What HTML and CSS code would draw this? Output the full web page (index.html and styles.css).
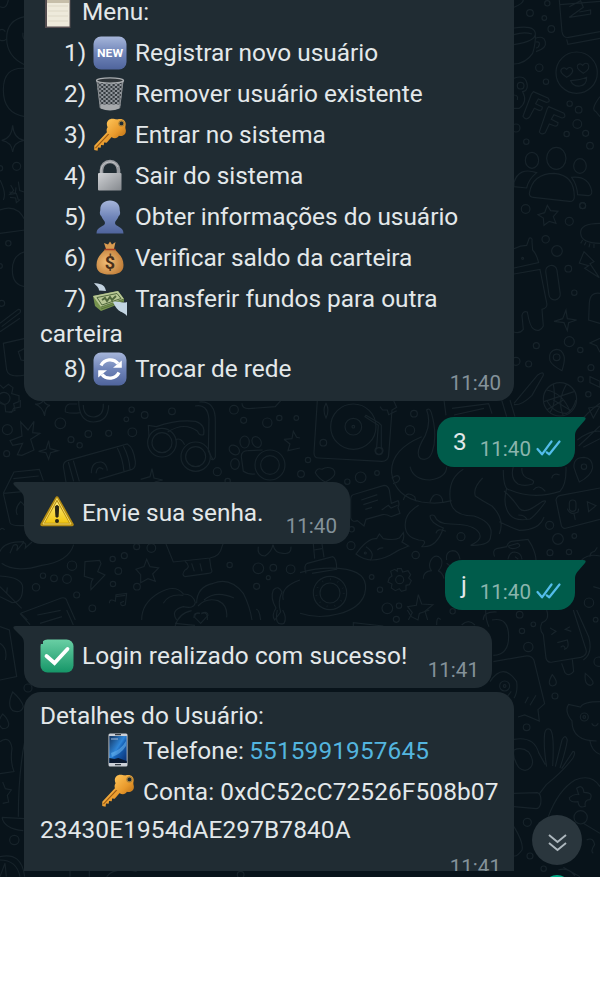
FILE: index.html
```html
<!DOCTYPE html>
<html lang="pt-BR">
<head>
<meta charset="utf-8">
<title>Chat</title>
<link rel="stylesheet" href="styles.css">
</head>
<body>
<svg class="defs" width="0" height="0" aria-hidden="true">
  <defs>
    <linearGradient id="blue" x1="0" y1="0" x2="0" y2="1"><stop offset="0" stop-color="#a6b6da"/><stop offset=".5" stop-color="#7085b9"/><stop offset="1" stop-color="#4f649c"/></linearGradient>
    <linearGradient id="green" x1="0" y1="0" x2="0" y2="1"><stop offset="0" stop-color="#69cfa4"/><stop offset="1" stop-color="#169668"/></linearGradient>
    <linearGradient id="gold" x1="0" y1="0" x2="1" y2="1"><stop offset="0" stop-color="#ffc65a"/><stop offset=".6" stop-color="#e99a2c"/><stop offset="1" stop-color="#b96f16"/></linearGradient>
    <linearGradient id="steel" x1="0" y1="0" x2="1" y2="1"><stop offset="0" stop-color="#cfd1d4"/><stop offset="1" stop-color="#85898e"/></linearGradient>
    <linearGradient id="yellow" x1="0" y1="0" x2="0" y2="1"><stop offset="0" stop-color="#fff08a"/><stop offset="1" stop-color="#f1c40a"/></linearGradient>
    <linearGradient id="screen" x1="0" y1="0" x2="1" y2="1"><stop offset="0" stop-color="#12335e"/><stop offset=".45" stop-color="#2f86d8"/><stop offset=".55" stop-color="#1763b8"/><stop offset="1" stop-color="#0a2c6c"/></linearGradient>
    <radialGradient id="bag" cx=".4" cy=".5" r=".65"><stop offset="0" stop-color="#f4bf78"/><stop offset="1" stop-color="#bd7a35"/></radialGradient>
    <pattern id="mesh" width="4.6" height="4" patternUnits="userSpaceOnUse"><path d="M0 0L4.6 4M4.6 0L0 4" stroke="#a9adb2" stroke-width=".9"/></pattern>
    <symbol id="key" viewBox="0 0 34 35">
      <path d="M15 13.5L.8 28.5V33l3.4.6.4-3.2 2.8.2.4-2.8 2.8.2.3-2.8 2.7.2 6-6.8z" fill="url(#gold)"/>
      <path d="M2 31L17 15" stroke="#9b5a12" stroke-width="1.2"/>
      <path d="M14.500 9.500C12 4 16 0 20.500.8 23 1 23.500 1.600 25 1.400c5-1.800 9 1.600 8 6.200-.4 2-.2 2.800.2 4.400 1 5-3.500 7.500-7 6.300-2 4.200-8.500 2.700-9.500-1.300-3.200-.8-4.200-5-2.200-7.500z" fill="url(#gold)"/>
      <circle cx="28.800" cy="5.600" r="2.600" fill="#202c33" stroke="#a9823b" stroke-width="1.300"/>
    </symbol>
    <symbol id="ticks" viewBox="0 0 26 16">
      <path d="M1.500 9l4.500 5.300L15.500 1.500M10.800 12.300l2.500 2L23.500 1.500" fill="none" stroke="#53bdeb" stroke-width="2.200" stroke-linecap="round" stroke-linejoin="round"/>
    </symbol>
  </defs>
</svg>

<main class="chat">
  <svg class="doodles" viewBox="0 0 600 877" aria-hidden="true">
    <g transform="scale(.3333)">
      <path d="M0 20Q20 30 25 0M75 50Q20 60 20 115T75 195M0 90Q10 85 16 95M0 120Q10 125 18 118M75 205Q10 200 10 270T75 350M75 120q-8 -5 -6 -22"/>
      <path d="M38 376q3 40 34 45-31 5-34 35-3-30-33-35 30-5 33-45zM55 545l4 27 16 5M55 600l-6-20-20 3 12-12-9-16"/>
      <circle cx="50" cy="499" r="12"/><circle cx="0" cy="505" r="8"/>
    </g>
    <g transform="translate(0 180) scale(.3333)">
      <path d="M0 0q20 40 10 60M28 36l18 4 2-18M30 52l17 2 2 14 12-10M0 90Q50 70 75 120M0 160L75 150M75 215q-38 10-38 55t38 50M75 225v85M0 430l55-42q10 0 5 10L5 440M0 455l60-40M75 475l-65 15 10 80q5 25 55 15M75 505l-20 10 8 25 12 2M0 615l10 10 15-12 14 10-4 18 22 6v18l-16 6 4 20-18 6"/>
      <circle cx="25" cy="190" r="8"/><circle cx="5" cy="370" r="9"/><circle cx="0" cy="258" r="7"/><circle cx="12" cy="655" r="18"/>
    </g>
    <g transform="translate(300) scale(.3333)">
      <path d="M642 22Q670 10 670 0M778 0l8 95q3 20 20 17L900 95M800 118l4 15 96-18M780 14l120-10M808 20l34-18 8 20-42 30 64-10v-12l-34 6"/>
      <path d="M642 84q60-10 64 15t-64 35M706 100q2 30-8 60-20 30-56 32M706 115q25-10 30 10t-28 30M708 126q12-2 10 8t-10 10M642 104q30-10 54-2"/>
      <circle cx="830" cy="218" r="62"/><path d="M800 232q-25-16-14-26 8-6 14 2 8-10 16-2 8 12-16 26zM850 220q-25-16-16-26 8-6 14 2 8-10 16-4 10 14-14 28zM812 242q30-2 48-10 0 24-20 26-20 2-28-16z"/>
      <path d="M642 235q36-14 40 22 0 16-14 18 16 30-10 50h-16M642 285q14 0 10 15"/><circle cx="662" cy="257" r="10"/>
      <path d="M700 275l45 20q8 12-6 12l-24-10-8 14 20 10q0 12-10 10l-14-6-14 26q-12 12-20-2l25-66zM746 320l46 20q8 12-6 14l-24-10-8 14 20 10q0 12-10 10l-16-6-12 26q-12 8-18-2l24-70z"/>
      <ellipse cx="696" cy="481" rx="20" ry="24"/><ellipse cx="769" cy="475" rx="29" ry="33"/><ellipse cx="840" cy="498" rx="19" ry="22"/>
      <path d="M688 580q10-60 75-60 60 5 60 70 0 15-15 14L700 592q-12 0-12-12zM710 518q-54-18-68 30v12l38 4q5-25 30-46zM815 532q50-5 60 40 2 14-10 15l-32-3q-2-30-18-52zM900 290q-30 40-12 45l12 15"/>
      <circle cx="690" cy="39" r="10"/><circle cx="742" cy="10" r="8"/><circle cx="733" cy="54" r="7"/><circle cx="754" cy="87" r="10"/><circle cx="718" cy="203" r="11"/><circle cx="738" cy="245" r="8"/><circle cx="809" cy="311" r="8"/><circle cx="836" cy="329" r="10"/><circle cx="832" cy="372" r="13"/><circle cx="800" cy="402" r="8"/><circle cx="857" cy="400" r="9"/><circle cx="870" cy="437" r="10"/><circle cx="679" cy="425" r="8"/><circle cx="648" cy="384" r="12"/><circle cx="848" cy="617" r="9"/><circle cx="677" cy="627" r="13"/>
    </g>
    <g transform="translate(300 200) scale(.3333)">
      <path d="M742 16l10 16 22 2-14 16 8 20-20-6-16 12-2-22-16-10 20-6zM642 146q20-10 38-10l8-22q10-2 8 10l2 26q12 12 18 38l-74 16M642 222l78-14 20 100q4 16-14 20l4 50q-10 20-28 10-12-5-20-52-14-4-16 10l4 42q-10 14-28 8"/>
      <rect x="742" y="196" width="34" height="104" rx="17" transform="rotate(-8 759 248)"/><circle cx="668" cy="175" r="3"/>
      <path d="M852 155l30 30-12 6 28 42-44-28 12-8-28-8zM900 70q-60 0-58 30t58 30M848 120l-6 10M858 126l-5 10M870 130l-3 12M882 132v12M900 280q-30-5-32 30l-2 50 34 10M798 330l4 26 28 4-24 8-4 24-10-24-30-4 26-8zM900 415l-30 14 20 8 10 20M770 448q-26 4-20 34 5 14 36 30 10-30 6-44-6-20-22-20zM642 610l70-84q20-15 18 0l-34 60q-30 30-54 28"/>
      <circle cx="770" cy="472" r="10"/><circle cx="780" cy="598" r="50"/><path d="M740 570q50 10 70 65M732 605q60-20 90-30M760 552q10 60-10 85M800 552q-30 50-10 95"/>
      <circle cx="808" cy="64" r="12"/><circle cx="848" cy="17" r="9"/><circle cx="737" cy="118" r="11"/><circle cx="771" cy="153" r="16"/><circle cx="805" cy="206" r="10"/><circle cx="823" cy="278" r="8"/><circle cx="808" cy="425" r="15"/><circle cx="709" cy="437" r="9"/><circle cx="841" cy="450" r="8"/><circle cx="686" cy="492" r="9"/><circle cx="648" cy="484" r="12"/><circle cx="873" cy="503" r="9"/><circle cx="842" cy="538" r="8"/><circle cx="865" cy="583" r="8"/><path d="M870 530l30 14v18l-30-14zM866 624l34-6-20 36z"/>
    </g>
    <g transform="translate(0 400) scale(.3333)">
      <path d="M105 12q20 2 25-12 5 15 20 16-15 4-16 32-6-28-29-36zM62 66l22 24 18-26-4 34 22 2-28 18 10 32-36 16-14-2 16-34-30 6-8-14 36-14zM146 122l4 24 24 6-22 6-6 20-8-20-22-4 22-6zM456 206l6 28 26 6-24 6M456 206l-6 24-28 8"/>
      <path d="M196 36q-2-20 12-24h24M196 36q20 6 44 2M236 0q0 65 44 66 45 0 46-50M250 15q0 35 32 36 30-4 28-40M190 200q0-14 12-18l180-50q18 10 24 52 2 20-10 24l-100 30M190 200l8 46M205 186l16 58M220 182l18 62M352 144q16 30 20 70M370 138q18 34 20 70M274 220q0-36 30-34 16 4 18 26M288 220q4-26 22-12"/>
      <circle cx="486" cy="128" r="43"/><circle cx="486" cy="128" r="30"/><circle cx="587" cy="170" r="44"/><circle cx="587" cy="170" r="30"/>
      <path d="M447 110l-2-34 24 4q60-22 118-16 30 10 24 40-14 4-18-10-40-30-90 2M526 120q16-10 28 14M585 18q38-8 42 40l-2 95 15 28M598 6q50-4 48 60v105q-5 14-15 4"/>
      <path d="M724 170q0-18 20-18l44-2M724 170l6 44q14 10 36 8"/><circle cx="810" cy="195" r="45"/><circle cx="810" cy="195" r="28"/><ellipse cx="703" cy="150" rx="13" ry="17" transform="rotate(-50 703 150)"/><ellipse cx="734" cy="126" rx="14" ry="18"/><ellipse cx="770" cy="126" rx="13" ry="17" transform="rotate(-30 770 126)"/><ellipse cx="705" cy="192" rx="13" ry="16"/>
      <path d="M852 118l24-2 4-22 10 18 10 2M852 118l18 14-6 20 36-8M726 10q0 16 20 16l80-6 18-20M0 5l15 10 2 20 18 2 6-12 20-4V0"/>
      <path d="M10 280L42 216l76-8 12 34M40 236l76-8M10 280l66-6M10 280l20 88q4 12 50 8M52 345q-10-18 10-40 22 18 14 38M0 390q6-10 14 0"/>
      <path d="M0 455q10-30 72-30M5 490q40 30 120 6 80-10 96-62M30 460l10-24q18-8 10 16l20-24q10 0 6 16l20-18M255 485l44-4 4 10-10 24 22 10-42 44q-2-24 6-32l-26-8zM440 478l10 22 26 4-18 18 8 22-22-8-22 12v-24l-14-16 24-8zM498 432l22 54 110-12q30-4 36-34l4-10M555 484q20 16 0 26-12 16 0 20l70-10q16 0 8-16l-4-28M575 490l8 24M600 490l6 24"/>
      <path d="M328 610q0-16 18-6l2-20 32-4-4 34q-14 8-14-6l10-4M346 590l30-4M0 528q70 4 68 36 0 44-32 44L0 590M0 560l65 65M20 580l2-18M62 640l122-46q14-4 18 12l24 54M62 640l20 20M112 645l70-14M425 660q0-50 50-80 50-30 75 2 30 0 36 26-4 20-36 12-40 10-20 40M490 610q16-30 60-24M590 610q0-50 50-60 50-20 90 30 20 40 26 80M594 618q24-26 60-16 30 14 26 50M768 628q10-2 14 32M612 600q36-30 90-6M600 640q-20-4-18 14M604 642q14-8 18 6v12"/>
      <path d="M820 570q16-16 26 6-14 30-4 60l-18 24q-10-14 4-36-18-30-8-54zM850 600q-10-40 50-60M775 440q-5 26 20 28 20-12 24-34 5 26 30 26 26 4 24-20"/>
      <circle cx="22" cy="89" r="15"/><circle cx="181" cy="70" r="16"/><circle cx="20" cy="161" r="9"/><circle cx="213" cy="119" r="9"/><circle cx="265" cy="102" r="10"/><circle cx="239" cy="136" r="8"/><circle cx="326" cy="100" r="9"/><circle cx="397" cy="97" r="13"/><circle cx="379" cy="58" r="7"/><circle cx="395" cy="29" r="8"/><circle cx="434" cy="45" r="10"/><circle cx="516" cy="34" r="10"/><circle cx="652" cy="215" r="12"/><circle cx="702" cy="29" r="13"/><circle cx="731" cy="61" r="9"/><circle cx="802" cy="68" r="14"/><circle cx="838" cy="54" r="8"/><circle cx="889" cy="54" r="7"/><circle cx="683" cy="243" r="8"/>
      <circle cx="338" cy="477" r="8"/><circle cx="373" cy="467" r="9"/><circle cx="216" cy="497" r="14"/><circle cx="355" cy="513" r="10"/><circle cx="129" cy="527" r="8"/><circle cx="162" cy="535" r="10"/><circle cx="201" cy="537" r="13"/><circle cx="108" cy="562" r="11"/><circle cx="230" cy="585" r="9"/><circle cx="277" cy="625" r="10"/><circle cx="339" cy="552" r="8"/><circle cx="411" cy="560" r="10"/><circle cx="410" cy="440" r="9"/><circle cx="454" cy="444" r="13"/><circle cx="689" cy="495" r="8"/><circle cx="775" cy="505" r="16"/><circle cx="820" cy="503" r="10"/><circle cx="805" cy="533" r="6"/><circle cx="770" cy="559" r="9"/><circle cx="872" cy="508" r="13"/>
    </g>
    <g transform="translate(300 400) scale(.3333)">
      <path d="M52 0l-10 158q0 16 14 16l190 10q18 0 20-18L276 30l14-8-10-22M78 10q-12 20 0 44 12-24 0-44zM240 20l8 10 14 0 4 14 24-12"/><circle cx="160" cy="80" r="68"/><circle cx="160" cy="80" r="25"/><circle cx="160" cy="80" r="4"/><circle cx="70" cy="128" r="10"/><path d="M195 50l40 26-5 66a12 12 0 1 0 14 0V76l-8-8-38-22z"/><circle cx="237" cy="153" r="10"/>
      <path d="M380 30q8-8 14 8 20 70 2 120-10 26-34 18-20-14 14-70 18-40 4-76zM365 110q-95 40-90 110 10 70 90 86 50 8 90-4M330 200q10 40 60 40 50-8 50-40M275 235q20-16 24 0 0 12-20 16M310 300q10-30 34-10l4 14M390 306q10-30 28-20 10 6 10 20M490 208q-50 30-38 100 10 40 70 40 60 20 50 60 0 30-60 28 44-20 20-44-20-20-80-20-40 0-48-24-8-6-14 0 0 20 40 36-20 60-64 56 20-20-10-20-44-10-40-50 0-30 40-54M548 234q-30 30-22 54 20 14 50 30 40 40 22 84M610 210q0 60 20 60 70 30 150 4 20-20 18-74M640 200q-10 36 14 52 20 8 44 0 8-10-6-14-30-8-26-34M620 265q-14 50 10 80 16 20 60 12 16-10 44-48 8-10-8-4l-24 16q-30 20-44 4-20-30-46-52M598 365q40 20 60 26 60 0 74-40M700 270q16-20 36 4M755 235q4-18 24-10M655 345q20 0 26 14M408 400q4-18 30-6"/>
      <path d="M432 0l6 46M456 25l110-14 10 30M462 45l90-20M605 0l15 50M630 0l15 50M740 0q20 40 60 40 20-10 28-40M740 30L790 0M760 0l50 30M838 70q20-30 62-60M832 120q40-30 68-26M836 138l64-60M850 142l50-26"/>
      <path d="M46 218q4-16 20-10 14-10 32-2 20 20-22 40-20-10-30-28zM152 298q0-14 14-16l86-26q12 0 16 14l6 40 20-8q6 10 0 20l6 18-26 10q-16-8-26-6l-50 14-6 20-20-16q-16 6-20-8zM184 300l48-16M190 314l44-14M196 328l20-6M245 330l20-14 8 8 20-8M168 462q36-50 62-46l8-14 12 14q34 6 48-2l12-16q4 18-4 28l20 12q-30 10-56 28-60 30-102-4zM198 440q30 20 12 42M232 450q8-8 18-6"/><circle cx="196" cy="459" r="3"/>
      <path d="M40 432l4 44M66 432l6 40M42 450l24-4M18 520q-8-24 4-30l76-20q12 4 12 38l-74 12M0 518q70-20 140-10 70 14 54 74-14 44-80 60-60 16-114-2"/><circle cx="90" cy="579" r="50"/><circle cx="90" cy="579" r="30"/><circle cx="90" cy="579" r="41" stroke-dasharray="2 22" stroke-width="6"/>
      <circle cx="299" cy="539" r="12"/><path d="M292 506l12 0 4 10 16-4 8 12-6 10 8 8-6 12-10 2v14l-14 4-6-8-12 6-12-8 2-12-12-6 4-12 8-6-4-14 12-6 8 6z"/>
      <path d="M355 584l10 28 34 2-24 20 8 26M355 584l-6 32-26 4 14 18-12 22M370 536q0-22 24-24-10-14-2-30 10-18 24-12 14 8 8 28-6 14-10 14 14 6 18 24M440 480q-4-26 18-28 18 0 22 26M440 490l24 18M584 470q-8-20 6-24l30-6q4-14 14-16l50-6q10 16 12 20 12 26 12 42M625 438l28-8q14 8-4 14-20 6-24-6M624 478q4-22 20-22 20 2 22 22M645 470l10 8M768 300q2-12 14-14l118-22M768 300l16 76q4 12 16 8l100-26M862 305l26 12-22 18z"/><rect x="808" y="300" width="20" height="34" rx="10"/><path d="M802 326q8 22 32 10l2-10M822 342l4 18"/>
      <path d="M852 172q-32 0-30 30 6 20 16 44 34-16 40-42 0-30-26-32z"/><circle cx="852" cy="200" r="8"/><path d="M870 470q0-14 14-16l8-12M845 480q20-20 55-12M880 560l20 6M550 660q-2-26 40-24"/>
      <circle cx="342" cy="41" r="10"/><circle cx="330" cy="91" r="14"/><circle cx="182" cy="232" r="16"/><circle cx="231" cy="219" r="7"/><circle cx="142" cy="245" r="8"/><circle cx="24" cy="180" r="8"/><circle cx="3" cy="222" r="10"/><circle cx="153" cy="437" r="12"/><circle cx="215" cy="531" r="7"/><circle cx="240" cy="569" r="8"/><circle cx="262" cy="625" r="16"/><circle cx="297" cy="617" r="8"/><circle cx="347" cy="465" r="11"/><circle cx="483" cy="410" r="12"/><circle cx="749" cy="376" r="12"/><circle cx="774" cy="417" r="16"/><circle cx="823" cy="408" r="7"/><circle cx="750" cy="458" r="9"/><circle cx="807" cy="456" r="8"/><circle cx="867" cy="608" r="14"/><circle cx="155" cy="388" r="8"/>
    </g>
    <g transform="translate(0 610) scale(.3333)">
      <path d="M60 10l30 34M120 40l66-20M200 0l20 45M0 50l28 10 22 140-50 10M0 100q24 16 16 50M38 246q-18 40 0 56 26 10 32-12-4-20-32-44zM8 312q-22 30 0 44 20 0 18-16-4-16-18-28zM0 395q30-20 36 20-6 40 6 70l-42 6M8 516l8 20 18 4-12 16 4 20-18 4M75 390q-20 100-20 230M6 622l68 4M6 622q6 34 64 40M0 740q65-15 74 60M0 750q50 0 60 50M0 800l15-40 4 40M210 800v-20l58-2v22M320 800q20-30 90-16M525 50q10-40 50-48M525 40l60 6M600 10q-16-4-16 12l18 18 22-24q0-14-20-6"/>
      <circle cx="84" cy="234" r="12"/><circle cx="43" cy="690" r="14"/><circle cx="722" cy="794" r="10"/><path d="M832 0q-10 50 20 40 10-16-4-40"/>
    </g>
    <g transform="translate(300 610) scale(.3333)">
      <path d="M160 48v-10l90 10M322 0l12 20 20 10 4-20 30-10M410 45q0-30 12-16M485 45q20-20 40 0M557 0q0 30 10 50M576 30q50-10 50 50 0 54-46 56M580 155l90-16q24-6 32 12l32 130-20 18 4 34-44-18-20 6M570 215q40-60 80 0 4 30-8 50M620 262l14-18M675 280l10-20M690 286l18-30"/><circle cx="614" cy="228" r="15"/><circle cx="614" cy="228" r="4"/>
      <path d="M740 0q10 30-14 38-10 20 4 36l8 70q4 16 20 12l84-14q24-6 14-30L820 0M830 0l36 80q14 50-16 70M785 160l10 28q12 14 26-4l-4-36M750 54l18 10-14 10M810 50l-14 8 18 6M772 98l30-8q8 26-10 28M782 112q10-10 14 4M757 194q-18 30 0 34 24-4 0-34zM856 190q-4 36 16 36 20-6-16-36zM900 275q-50 0-58 16l-36-8q-14 20 10 50 0 60 74 60M870 393q5 30 30 40M875 340q10 16 20 0"/><circle cx="853" cy="321" r="12"/><circle cx="853" cy="321" r="4"/>
      <path d="M642 388q60-10 74 40l20 36M642 420q24-10 44 6 20 30 6 46-16 18-36 0-20-30-14-52M740 470q-10-60-6-100 4-18 16-12 14 10 8 110M766 470l20-80q10-20 16 0-4 30-22 84M785 476l34-52q10 0 0 20-30 40-80 80l-20 26M642 550l70-2q14 4 10 34-4 14-14 14l-66-6M745 620q30-80 80-110 50-20 75 20M830 535q18-14 22 12 30 0 18 22-18 0-14 20-20 8-22-14-26 4-26-12 14-12 28-10zM642 650q30 50 24 70-14 20-24 18M850 640l50 30M860 690q20-10 24 14-14 20-4 26M775 780q30-10 50 18M790 772l50 28"/>
      <circle cx="289" cy="28" r="9"/><circle cx="458" cy="4" r="8"/><circle cx="659" cy="14" r="10"/><circle cx="700" cy="43" r="7"/><circle cx="666" cy="63" r="8"/><circle cx="685" cy="111" r="14"/><circle cx="887" cy="29" r="7"/><circle cx="765" cy="258" r="9"/><circle cx="680" cy="352" r="10"/><circle cx="682" cy="637" r="12"/><circle cx="690" cy="738" r="9"/><circle cx="842" cy="622" r="20"/><circle cx="731" cy="776" r="8"/><circle cx="896" cy="155" r="14"/>
    </g>
  </svg>

  <section class="bubble in menu">
    <div class="line title"><svg class="emoji" viewBox="0 0 34 34"><rect x="5" y="1" width="25.500" height="32" fill="#554d50"/><path d="M7 0h22.500v31.500H7z" fill="#eeeadb"/><path d="M8 11h20M8 16h20M8 21h20M8 26h20" stroke="#ddd8c6"/><path d="M7 4h22v4H7z" fill="#c6bea9"/></svg><span>Menu:</span></div>
    <div class="line item"><b>1)</b><svg class="emoji" viewBox="0 0 34 34"><rect x=".5" y=".5" width="33" height="33" rx="7.500" fill="url(#blue)"/><text class="new" x="17" y="21.300" text-anchor="middle" textLength="26" lengthAdjust="spacingAndGlyphs">NEW</text></svg><span>Registrar novo usuário</span></div>
    <div class="line item"><b>2)</b><svg class="emoji" viewBox="0 0 34 34"><path d="M3.500 2.500h27L27 31q-10 4-20 0z" fill="#32383d"/><path d="M3.500 3h27L27 31q-10 4-20 0z" fill="url(#mesh)"/><path d="M7 27.500h20l-.5 4q-9.500 4-19 0z" fill="#a5a8ab"/><path d="M4 4l3.300 27M30 4l-3.300 27" stroke="#898e92"/><ellipse cx="17" cy="3.500" rx="13.500" ry="2.600" fill="#30363a" stroke="#abaeb1" stroke-width="1.300"/></svg><span>Remover usuário existente</span></div>
    <div class="line item"><b>3)</b><svg class="emoji"><use href="#key"/></svg><span>Entrar no sistema</span></div>
    <div class="line item"><b>4)</b><svg class="emoji" viewBox="0 0 34 34"><path d="M8.500 16v-5a8.500 8.500 0 0 1 17 0v5" fill="none" stroke="#96999e" stroke-width="3.600"/><path d="M8 15v-4a9 9 0 0 1 17-3" fill="none" stroke="#c3c5c8" stroke-width="1"/><rect x="5" y="14" width="23.500" height="17.500" rx="1" fill="url(#steel)"/></svg><span>Sair do sistema</span></div>
    <div class="line item"><b>5)</b><svg class="emoji" viewBox="0 0 34 34"><path d="M17 .5c6 0 9.700 3.500 9.700 9 0 2 .6 2 .4 4-.2 2-1.300 2-1.800 3.500-1 2.500-3.300 4-3.300 6 0 4 8.500 3 8.500 10.500H3.500C3.500 26 12 27 12 23c0-2-2.300-3.500-3.300-6-.5-1.500-1.600-1.500-1.800-3.500-.2-2 .4-2 .4-4 0-5.500 3.700-9 9.700-9z" fill="url(#blue)"/></svg><span>Obter informações do usuário</span></div>
    <div class="line item"><b>6)</b><svg class="emoji" viewBox="0 0 34 34"><path d="M13 8l-2-6 4 1.500L17 .5l2 3L22.500 1 21 8z" fill="#d89a50"/><path d="M12 8.500h10c2 3 8.500 7 8.500 15.500 0 7-5 9.500-13.500 9.500S3.500 31 3.500 24C3.500 15.500 10 11.500 12 8.500z" fill="url(#bag)"/><path d="M11.500 8.500h11" stroke="#a83f24" stroke-width="1.500"/><text class="dollar" x="17" y="28" text-anchor="middle">$</text></svg><span>Verificar saldo da carteira</span></div>
    <div class="line item"><b>7)</b><svg class="emoji" viewBox="0 0 34 34"><path d="M0 14L25 9l6 8v3L8 29 2 24z" fill="#77944f"/><path d="M0 14L25 9l6 8L8 25z" fill="#b8c795"/><path d="M4 15.500l20-4 4 5L9 23z" fill="none" stroke="#50683d"/><path d="M9 18l3-2 2 3 3-4 2 3 4-4" fill="none" stroke="#50683d" stroke-width="2"/><path d="M8 25l23-8M8 27l23-8" stroke="#4f6937" stroke-width=".8"/><path d="M1 1c5 .5 11 1 12 8L6 8.500C6 5 3 4 1 1z" fill="#c2d2df"/><path d="M20 20c5-2 9 2 14 0v14c-3-5-9-2-14-14z" fill="#c3d5e2"/></svg><span>Transferir fundos para outra</span></div>
    <div class="line wrap"><span>carteira</span></div>
    <div class="line item last"><b>8)</b><svg class="emoji" viewBox="0 0 34 34"><rect x=".5" y=".5" width="33" height="33" rx="7.500" fill="url(#blue)"/><path d="M8 13.500A10.200 10.200 0 0 1 25 11.500M26 20.500A10.200 10.200 0 0 1 9 22.500" fill="none" stroke="#fff" stroke-width="3.300"/><path d="M20 15.800h8.800V8.500zM14 18.200H5.200v7.300z" fill="#fff"/></svg><span>Trocar de rede</span></div>
    <time>11:40</time>
  </section>

  <section class="bubble out three"><span>3</span><time>11:40</time><svg class="ticks"><use href="#ticks"/></svg></section>

  <section class="bubble in tail warning">
    <div class="line title"><svg class="emoji" viewBox="0 0 34 34"><path d="M17 3L32 29.500H2z" fill="url(#yellow)" stroke="#b38b13" stroke-width="3.500" stroke-linejoin="round"/><path d="M17 3.500L31 29H3z" fill="none" stroke="#f6dc64" stroke-width="1" stroke-linejoin="round"/><path d="M15.300 11.500q1.700-2 3.400 0L18 22h-2z" fill="#292615" stroke="#292615"/><circle cx="17" cy="26" r="2" fill="#292615"/></svg><span>Envie sua senha.</span></div>
    <time>11:40</time>
  </section>

  <section class="bubble out letter"><span>j</span><time>11:40</time><svg class="ticks"><use href="#ticks"/></svg></section>

  <section class="bubble in tail login">
    <div class="line title"><svg class="emoji" viewBox="0 0 34 34"><rect x=".5" y=".5" width="33" height="33" rx="7" fill="url(#green)"/><path d="M6.500 17l8 7L27.500 10" fill="none" stroke="#fff" stroke-width="3.800" stroke-linecap="round"/></svg><span>Login realizado com sucesso!</span></div>
    <time>11:41</time>
  </section>

  <section class="bubble in details">
    <div class="line heading">Detalhes do Usuário:</div>
    <div class="line field phone"><svg class="emoji" viewBox="0 0 34 34"><rect x="7.500" y=".5" width="19" height="33" rx="1.500" fill="#cbd0d7"/><rect x="8.300" y="3" width="17.400" height="27" fill="url(#screen)"/><path d="M10 20Q20 17 25 8v5Q20 21 11 24z" fill="#6bb7ef" opacity=".55"/><path d="M8.300 30v-5l5 1 4-1 8.400 3v2z" fill="#0a1930"/><path d="M10 6h7" stroke="#9eb9d8"/><path d="M14 1.700h6M14 31.700h6" stroke="#343c45" stroke-width="1.300"/></svg><span>Telefone: <a>5515991957645</a></span></div>
    <div class="line field account"><svg class="emoji"><use href="#key"/></svg><span>Conta: 0xdC52cC72526F508b07</span></div>
    <div class="line hash">23430E1954dAE297B7840A</div>
    <time>11:41</time>
  </section>

  <div class="scroll-down"><svg viewBox="0 0 50 50"><path d="M17 20l8.500 7 8.500-7M17 28l8.500 7 8.500-7" fill="none" stroke="#aeb8be" stroke-width="1.900"/></svg></div>
  <div class="badge"></div>
</main>
</body>
</html>
```
FILE: styles.css
```css
* { box-sizing: border-box; }

body {
  margin: 0;
  background: #fff;
  font-family: Roboto, "Noto Sans", sans-serif;
}

.defs { position: absolute; }

.chat {
  position: relative;
  display: flex;
  flex-direction: column;
  width: 600px;
  height: 877px;
  overflow: hidden;
  background: #08131a;
  color: #e3e8ea;
  font-size: 24.4px;
}

.doodles {
  position: absolute;
  inset: 0;
  width: 600px;
  height: 877px;
  fill: none;
  stroke: #17232a;
  stroke-width: 3.500;
}

.bubble {
  position: relative;
  flex: none;
  border-radius: 17px;
}

.in {
  align-self: flex-start;
  margin-left: 24px;
  padding-left: 16px;
  background: #202c33;
}

.line {
  display: flex;
  align-items: center;
  height: 41px;
  line-height: 41px;
  white-space: pre;
}

.emoji {
  flex: none;
  width: 34px;
  height: 34px;
}

.title { gap: 8px; }

.item {
  display: grid;
  grid-template-columns: 29px 34px auto;
  column-gap: 0;
  padding-left: 24px;
}

.item b { font-weight: 400; }
.item span { padding-left: 8px; }

.new {
  fill: #fff;
  font: 700 11.5px Roboto, sans-serif;
}

.dollar {
  fill: #49301c;
  font: 700 18px Roboto, sans-serif;
}

time {
  color: #84929a;
  font-size: 20.6px;
  line-height: 24px;
}

.in time {
  position: absolute;
  right: 13px;
  bottom: 6px;
}

.menu {
  width: 490px;
  height: 401px;
  border-radius: 0 0 17px 17px;
}

.menu .title { height: 32px; padding-bottom: 9px; }
.wrap { height: 29px; line-height: 29px; }
.last { height: 41px; }

.tail::before {
  content: "";
  position: absolute;
  left: -11px;
  top: 0;
  width: 30px;
  height: 18px;
  background: #202c33;
  clip-path: path("M3 0H30V18H11Q11 12 7 9L1 3Q-1 0 3 0Z");
}

.out {
  display: flex;
  align-self: flex-end;
  align-items: center;
  width: 138px;
  height: 50px;
  margin-right: 25px;
  padding-left: 16px;
  background: #005c4b;
}

.out span { padding-bottom: 2px; }

.out::before {
  content: "";
  position: absolute;
  right: -11px;
  top: 0;
  width: 30px;
  height: 18px;
  background: #005c4b;
  clip-path: path("M27 0H0V18H19Q19 14 23 10L29 3Q31 0 27 0Z");
}

.out time {
  margin-left: auto;
  padding-top: 14px;
  color: #8bb5ad;
}

.ticks {
  width: 26px;
  height: 16px;
  margin: 11px 13px 0 5px;
}

.three { margin-top: 16px; }
.letter { width: 130px; margin-top: 16px; }

.warning {
  width: 326px;
  height: 62px;
  margin-top: 15px;
  padding-top: 9px;
}

.warning span { padding-top: 2px; }

.login {
  width: 468px;
  height: 62px;
  margin-top: 16px;
  padding-top: 9px;
  letter-spacing: .1px;
}

.login time,
.details time { letter-spacing: 0; }

.details {
  width: 490px;
  height: 179px;
  margin-top: 4px;
  padding-top: 7px;
  overflow: hidden;
  border-radius: 17px 17px 0 0;
}

.heading { height: 33px; line-height: 33px; }
.field { gap: 8px; }
.phone { height: 36px; padding-left: 61px; }
.account { height: 46px; padding-left: 61px; }
.hash { height: 32px; line-height: 32px; }
.details a { color: #53b5df; }
.phone,
.account,
.hash { letter-spacing: .13px; }
.phone a { margin-left: -1px; }
.details time { bottom: -8px; }

.scroll-down {
  position: absolute;
  left: 532px;
  top: 815px;
  width: 50px;
  height: 50px;
  border-radius: 50%;
  background: #2a363d;
}

.badge {
  position: absolute;
  left: 543px;
  top: 875px;
  width: 28px;
  height: 28px;
  border-radius: 50%;
  background: #00a884;
}
```
